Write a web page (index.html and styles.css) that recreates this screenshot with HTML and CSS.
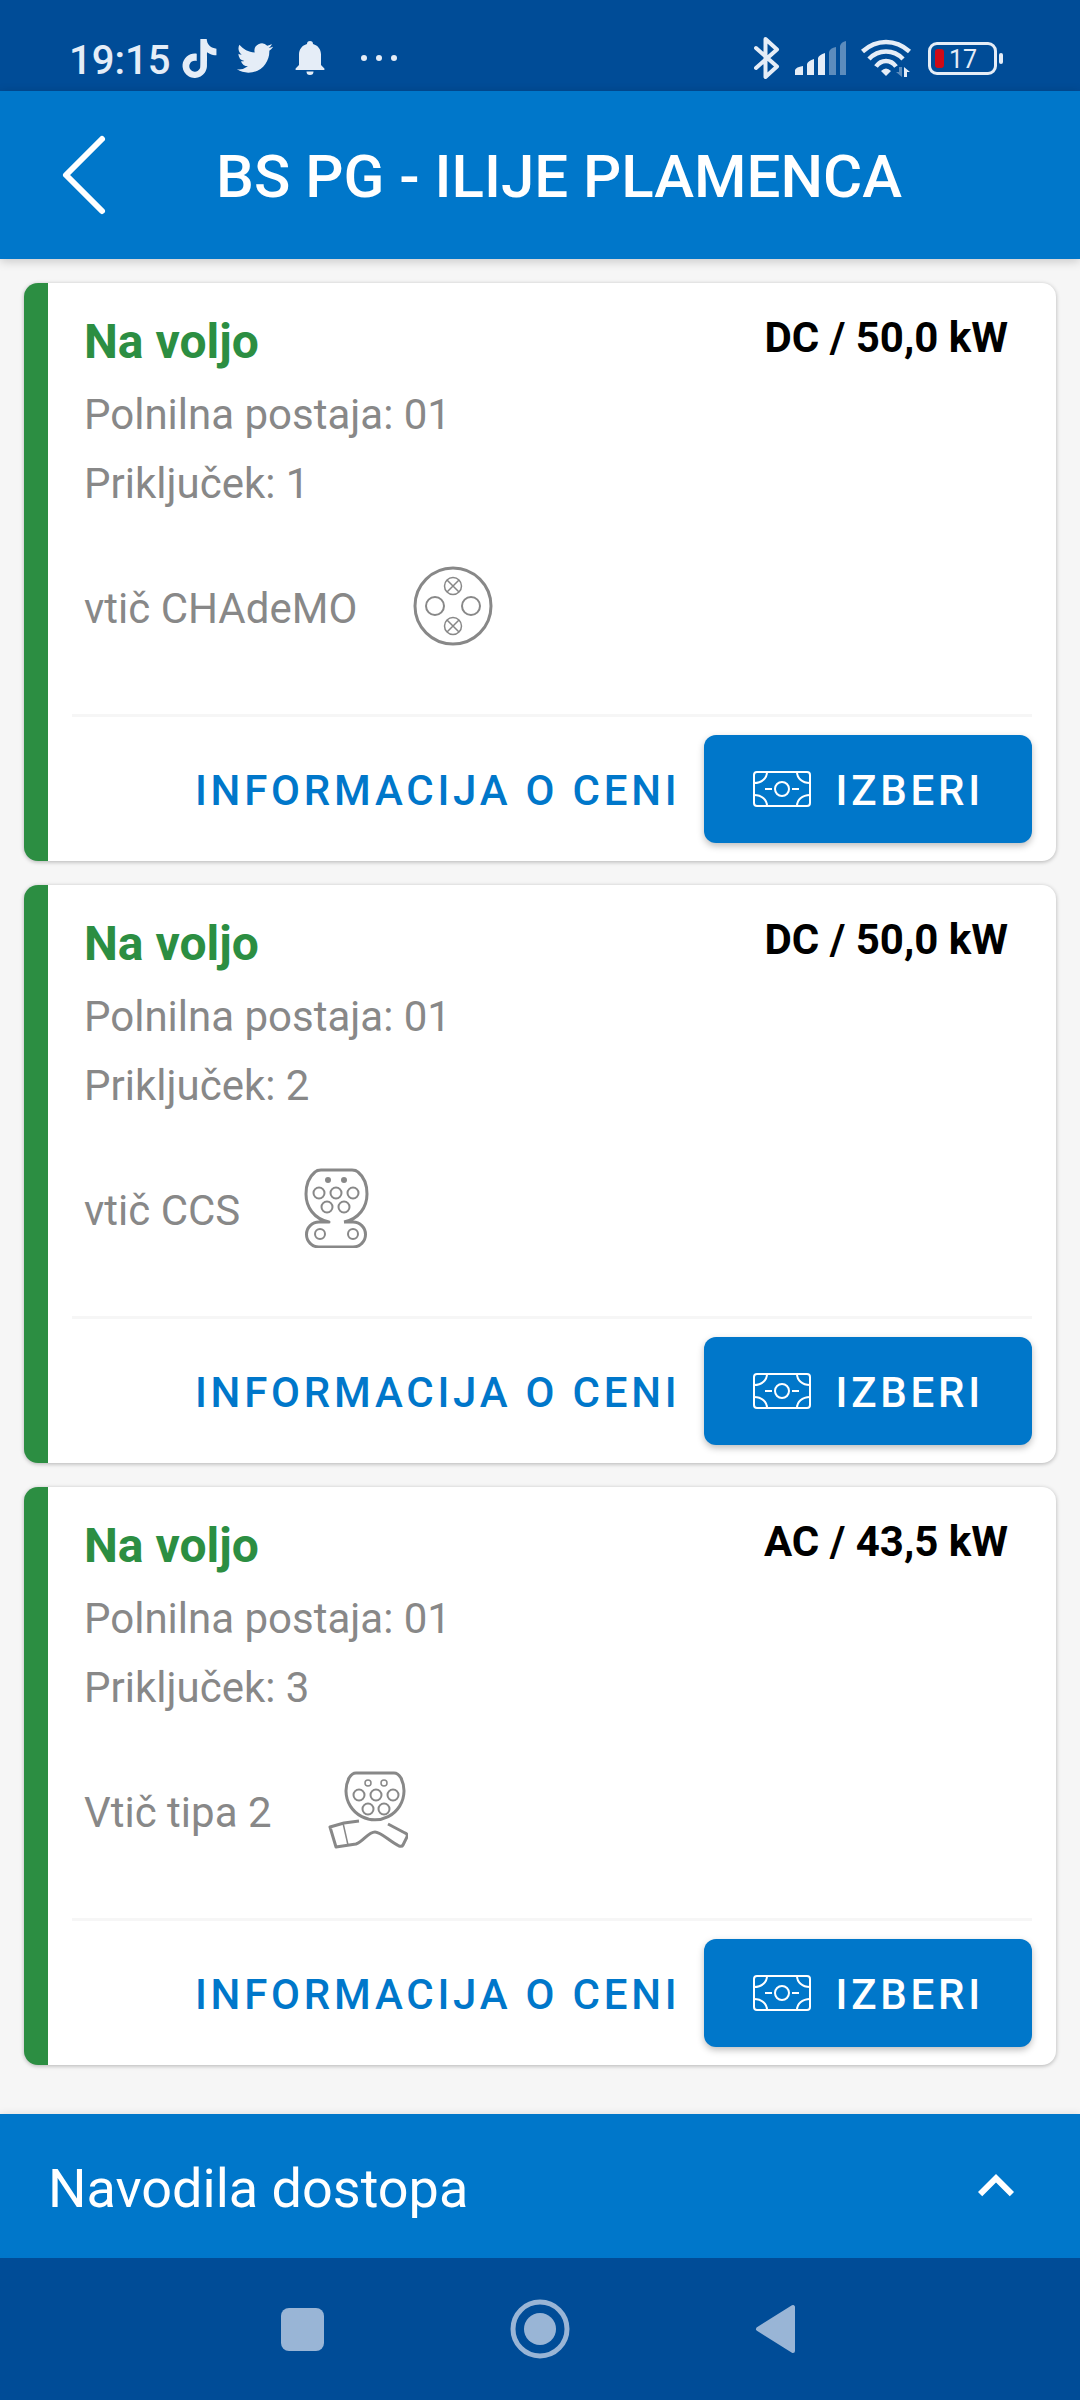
FILE: index.html
```html
<!DOCTYPE html>
<html lang="sl">
<head>
<meta charset="utf-8">
<meta name="viewport" content="width=device-width, initial-scale=1">
<title>BS PG - ILIJE PLAMENCA</title>
<link rel="stylesheet" href="styles.css">
</head>
<body>
<svg class="sprite" aria-hidden="true">
  <symbol id="banknote" viewBox="0 0 60 60">
    <g fill="none" stroke="currentColor" stroke-width="2">
      <rect x="2" y="13" width="56" height="34" rx="3"/>
      <circle cx="30" cy="30" r="7"/>
      <path d="M13 30h7M40 30h7M15 13c0 6-5 11-13 11M45 13c0 6 5 11 13 11M15 47c0-6-5-11-13-11M45 47c0-6 5-11 13-11"/>
    </g>
  </symbol>
</svg>

<div class="screen">
  <div class="status">
    <div class="status-group">
      <span class="clock">19:15</span>
      <svg class="s-tiktok" viewBox="0 0 24 24" fill="currentColor"><path d="M12.525.02c1.31-.02 2.61-.01 3.91-.02.08 1.53.63 3.09 1.75 4.17 1.12 1.11 2.7 1.62 4.24 1.79v4.03c-1.44-.05-2.89-.35-4.2-.97-.57-.26-1.1-.59-1.62-.93-.01 2.92.01 5.84-.02 8.75-.08 1.4-.54 2.79-1.35 3.94-1.31 1.92-3.58 3.17-5.91 3.21-1.43.08-2.86-.31-4.08-1.03-2.02-1.19-3.44-3.37-3.65-5.71-.02-.5-.03-1-.01-1.49.18-1.9 1.12-3.72 2.58-4.96 1.66-1.44 3.98-2.13 6.15-1.72.02 1.48-.04 2.96-.04 4.44-.99-.32-2.15-.23-3.02.37-.63.41-1.11 1.04-1.36 1.75-.21.51-.15 1.07-.14 1.61.24 1.64 1.82 3.02 3.5 2.87 1.12-.01 2.19-.66 2.77-1.61.19-.33.4-.67.41-1.06.1-1.79.06-3.57.07-5.36.01-4.03-.01-8.05.02-12.07z"/></svg>
      <svg class="s-twitter" viewBox="0 0 24 24" fill="currentColor"><path d="M23.953 4.57a10 10 0 01-2.825.775 4.958 4.958 0 002.163-2.723c-.951.555-2.005.959-3.127 1.184a4.92 4.92 0 00-8.384 4.482C7.69 8.095 4.067 6.13 1.64 3.162a4.822 4.822 0 00-.666 2.475c0 1.71.87 3.213 2.188 4.096a4.904 4.904 0 01-2.228-.616v.06a4.923 4.923 0 003.946 4.827 4.996 4.996 0 01-2.212.085 4.936 4.936 0 004.604 3.417 9.867 9.867 0 01-6.102 2.105c-.39 0-.779-.023-1.17-.067a13.995 13.995 0 007.557 2.209c9.053 0 13.998-7.496 13.998-13.985 0-.21 0-.42-.015-.63A9.935 9.935 0 0024 4.59z"/></svg>
      <svg class="s-bell" viewBox="0 0 30 34" fill="currentColor"><path d="M15 0a3 3 0 0 1 3 3c5 1.400 8 5.500 8 10.500V24l3.400 3.500V29H.6v-1.500L4 24V13.500C4 8.500 7 4.400 12 3a3 3 0 0 1 3-3zM11.500 30.500h7a3.500 3.500 0 0 1-7 0z"/></svg>
      <svg class="s-dots" viewBox="0 0 38 8" fill="currentColor"><circle cx="4" cy="4" r="3"/><circle cx="19" cy="4" r="3"/><circle cx="34" cy="4" r="3"/></svg>
    </div>
    <div class="status-group">
      <svg class="s-bt" viewBox="0 0 26 42" fill="none" stroke="currentColor" stroke-width="4" stroke-linejoin="round" stroke-linecap="round"><path d="M2 11l21 18.500L11.500 40V2L23 12.500 2 31"/></svg>
      <svg class="s-signal" viewBox="0 0 52 36" fill="currentColor"><path d="M0 35v-5q1-3 8-4v9zM12 35V24q1-3 7-5v16zM23 35V18q1-3 7-5v22z"/><path opacity=".4" d="M34 35V12q1-4 7-5v28zM45 35V6q1-4 6-5v34z"/></svg>
      <svg class="s-wifi" viewBox="0 0 50 38"><g fill="none" stroke="currentColor" stroke-width="4.500"><path d="M1.500 12.500Q12 3 25 3t23.500 9.500M8 20Q15 12.500 25 12.500T42 20M15 27.500Q19 22 25 22t10 5.500"/></g><path fill="currentColor" d="M20 32q5-5 10 0l-5 5z"/><path fill="currentColor" d="M43 28l6 5h-3v5h-3z"/><path fill="currentColor" opacity=".4" d="M41 38l-6-5h3v-5h3z"/></svg>
      <div class="battery"><span>17</span></div>
    </div>
  </div>

  <header class="appbar">
    <button class="back" type="button" aria-label="Nazaj"><svg viewBox="0 0 48 84" fill="none" stroke="currentColor" stroke-width="6" stroke-linecap="round" stroke-linejoin="round"><path d="M42 6L6 42l36 36"/></svg></button>
    <h1>BS PG - ILIJE PLAMENCA</h1>
  </header>

  <main class="list">
    <article class="card">
      <div class="info">
        <div class="head"><h2>Na voljo</h2><strong>DC / 50,0 kW</strong></div>
        <p>Polnilna postaja: 01</p>
        <p>Priključek: 1</p>
        <div class="plug">
          <span>vtič CHAdeMO</span>
          <svg viewBox="0 0 80 80" fill="none" stroke="currentColor"><circle cx="40" cy="40" r="38" stroke-width="3"/><g stroke-width="2"><circle cx="22" cy="40" r="9"/><circle cx="58" cy="40" r="9"/></g><g stroke-width="1.500"><circle cx="40" cy="20" r="8.500"/><circle cx="40" cy="60" r="8.500"/><path d="M34 14l12 12M46 14L34 26M34 54l12 12M46 54L34 66"/></g></svg>
        </div>
      </div>
      <div class="actions">
        <button class="price" type="button">INFORMACIJA O CENI</button>
        <button class="select" type="button"><svg><use href="#banknote"/></svg><span>IZBERI</span></button>
      </div>
    </article>

    <article class="card">
      <div class="info">
        <div class="head"><h2>Na voljo</h2><strong>DC / 50,0 kW</strong></div>
        <p>Polnilna postaja: 01</p>
        <p>Priključek: 2</p>
        <div class="plug">
          <span>vtič CCS</span>
          <svg viewBox="0 0 80 80" fill="none" stroke="currentColor" stroke-width="3" stroke-linejoin="round"><path d="M48 54h9a12.500 12.500 0 0 1 0 25H23a12.500 12.500 0 0 1 0-25h10C18 51 10 39 10 26c0-9 3-17 9-22q2-2 6-2h31q4 0 6 2c6 5 9 13 9 22 0 13-8 25-23 28"/><g stroke-width="2"><circle cx="23" cy="25" r="5.500"/><circle cx="40" cy="25" r="5.500"/><circle cx="57" cy="25" r="5.500"/><circle cx="31" cy="39" r="5.500"/><circle cx="48" cy="39" r="5.500"/><circle cx="24" cy="66" r="5"/><circle cx="57" cy="66" r="5"/></g><g fill="currentColor" stroke="none"><circle cx="32" cy="12" r="3"/><circle cx="48" cy="12" r="3"/></g></svg>
        </div>
      </div>
      <div class="actions">
        <button class="price" type="button">INFORMACIJA O CENI</button>
        <button class="select" type="button"><svg><use href="#banknote"/></svg><span>IZBERI</span></button>
      </div>
    </article>

    <article class="card">
      <div class="info">
        <div class="head"><h2>Na voljo</h2><strong>AC / 43,5 kW</strong></div>
        <p>Polnilna postaja: 01</p>
        <p>Priključek: 3</p>
        <div class="plug">
          <span>Vtič tipa 2</span>
          <svg viewBox="0 0 80 80" fill="none" stroke="currentColor" stroke-width="3" stroke-linejoin="round"><path d="M28 3h38q4 0 7 5a29 29 0 1 1-52 0q3-5 7-5z"/><path d="M31 51l-15 2L2 57l6 20 20-3c8-3 12-12 19-12 6 0 14 9 24 14q3 1 4-1l4-8q1-3-2-4L60 54"/><path stroke-width="1.500" d="M15 53l5 22"/><g stroke-width="2"><circle cx="31" cy="25" r="5.500"/><circle cx="48" cy="25" r="5.500"/><circle cx="65" cy="25" r="5.500"/><circle cx="40" cy="39" r="5.500"/><circle cx="56" cy="39" r="5.500"/></g><g stroke-width="1.500"><circle cx="40" cy="13" r="3"/><circle cx="56" cy="13" r="3"/></g></svg>
        </div>
      </div>
      <div class="actions">
        <button class="price" type="button">INFORMACIJA O CENI</button>
        <button class="select" type="button"><svg><use href="#banknote"/></svg><span>IZBERI</span></button>
      </div>
    </article>
  </main>

  <button class="access" type="button" aria-expanded="false">
    <span>Navodila dostopa</span>
    <svg viewBox="0 0 24 24" fill="currentColor"><path d="M12 8l-6 6 1.410 1.410L12 10.830l4.590 4.580L18 14z"/></svg>
  </button>

  <nav class="sysnav" aria-label="Sistem">
    <button type="button" aria-label="Nedavno"><svg viewBox="0 0 60 60" fill="currentColor"><rect x="8" y="9" width="43" height="43" rx="8"/></svg></button>
    <button type="button" aria-label="Domov"><svg viewBox="0 0 60 60"><circle cx="30" cy="30" r="27" fill="none" stroke="currentColor" stroke-width="5"/><circle cx="30" cy="30" r="16" fill="currentColor"/></svg></button>
    <button type="button" aria-label="Nazaj"><svg viewBox="0 0 60 60" fill="currentColor" stroke="currentColor" stroke-width="4" stroke-linejoin="round"><path d="M11 30L46 8v44z"/></svg></button>
  </nav>
</div>
</body>
</html>
```

FILE: styles.css
```css
* { box-sizing: border-box; }

body {
  margin: 0;
  background: #f6f6f6;
  font-family: Roboto, "Liberation Sans", sans-serif;
}

h1, h2, p { margin: 0; }

button {
  margin: 0;
  padding: 0;
  border: 0;
  background: none;
  color: inherit;
  font: inherit;
  cursor: pointer;
}

svg { display: block; flex: none; }

.sprite { display: none; }

.screen {
  display: flex;
  flex-direction: column;
  min-height: 100vh;
}

/* Status bar */
.status {
  display: flex;
  justify-content: space-between;
  padding: 26px 77px 0 69px;
  height: 91px;
  background: #004c97;
  color: #e5edf7;
}

.status-group {
  display: flex;
  align-items: center;
  height: 64px;
}

.clock {
  margin-right: 10px;
  padding-top: 6px;
  font-size: 40px;
  font-weight: 500;
  line-height: 58px;
}

.s-tiktok { width: 39px; height: 39px; }
.s-twitter { width: 36px; height: 36px; margin-left: 18px; }
.s-bell { width: 30px; height: 34px; margin-left: 22px; }
.s-dots { width: 38px; height: 8px; margin-left: 35px; }
.s-bt { width: 26px; height: 42px; }
.s-signal { width: 52px; height: 36px; margin-left: 15px; }
.s-wifi { width: 50px; height: 38px; margin-left: 14px; }

.battery {
  position: relative;
  width: 69px;
  height: 33px;
  margin: 0 6px 0 17px;
  border: 3px solid currentColor;
  border-radius: 9px;
  font-size: 25px;
  line-height: 30px;
  padding-left: 18px;
}

.battery::before {
  content: "";
  position: absolute;
  left: 4px;
  top: 4px;
  width: 9px;
  height: 19px;
  border-radius: 3px;
  background: #d00a16;
}

.battery::after {
  content: "";
  position: absolute;
  right: -9px;
  top: 8px;
  width: 4px;
  height: 11px;
  border-radius: 2px;
  background: currentColor;
}

/* App bar */
.appbar {
  position: relative;
  display: flex;
  align-items: center;
  height: 168px;
  padding-right: 130px;
  background: #0077ca;
  color: #fff;
  box-shadow: 0 2px 10px rgba(0, 0, 0, 0.2);
}

.back {
  display: flex;
  justify-content: center;
  width: 168px;
}

.back svg { width: 48px; height: 84px; }

.appbar h1 {
  flex: 1;
  padding-top: 4px;
  font-size: 60px;
  font-weight: 500;
  line-height: 72px;
  text-align: center;
}

/* Connector cards */
.list {
  display: flex;
  flex: 1;
  flex-direction: column;
  gap: 24px;
  padding: 24px 24px 48px;
}

.card {
  padding: 31px 24px 18px;
  border-left: 24px solid #2c8e42;
  border-radius: 14px;
  background: #fff;
  box-shadow: 0 1px 4px rgba(0, 0, 0, 0.28);
}

.info {
  padding: 0 24px 68px 12px;
  border-bottom: 3px solid #f6f6f6;
  color: #888;
  font-size: 42px;
  line-height: 69px;
}

.head {
  display: flex;
  justify-content: space-between;
  margin-bottom: 10px;
  line-height: 56px;
}

.head h2 {
  color: #2c8e42;
  font-size: 48px;
  font-weight: 700;
}

.head strong {
  color: #000;
  font-weight: 700;
  line-height: 48px;
}

.plug {
  display: flex;
  align-items: center;
  gap: 56px;
  margin-top: 48px;
  height: 80px;
}

.plug span { padding-top: 4px; }

.plug svg { width: 80px; height: 80px; }

.actions {
  display: flex;
  justify-content: flex-end;
  gap: 23px;
  padding-top: 18px;
  font-size: 42px;
  font-weight: 500;
}

.actions button {
  height: 108px;
  letter-spacing: 0.09em;
}

.actions .price {
  padding-top: 2px;
  color: #0077ca;
}

.actions .select {
  display: flex;
  align-items: center;
  gap: 24px;
  padding: 0 48px;
  border-radius: 12px;
  background: #0077ca;
  box-shadow: 0 3px 7px rgba(0, 0, 0, 0.26);
  color: #fff;
}

.select span { padding-top: 2px; }

.select svg { width: 60px; height: 60px; }

/* Access instructions bar */
.access {
  display: flex;
  align-items: center;
  justify-content: space-between;
  height: 144px;
  padding: 0 48px;
  background: #0077ca;
  box-shadow: 0 0 8px rgba(0, 0, 0, 0.1);
  color: #fff;
  font-size: 54px;
}

.access span { padding-top: 4px; }

.access svg { width: 72px; height: 72px; }

/* System navigation */
.sysnav {
  display: flex;
  align-items: center;
  justify-content: center;
  gap: 177px;
  height: 142px;
  background: #004c97;
  color: #99b5d6;
}

.sysnav svg { width: 60px; height: 60px; }
```
